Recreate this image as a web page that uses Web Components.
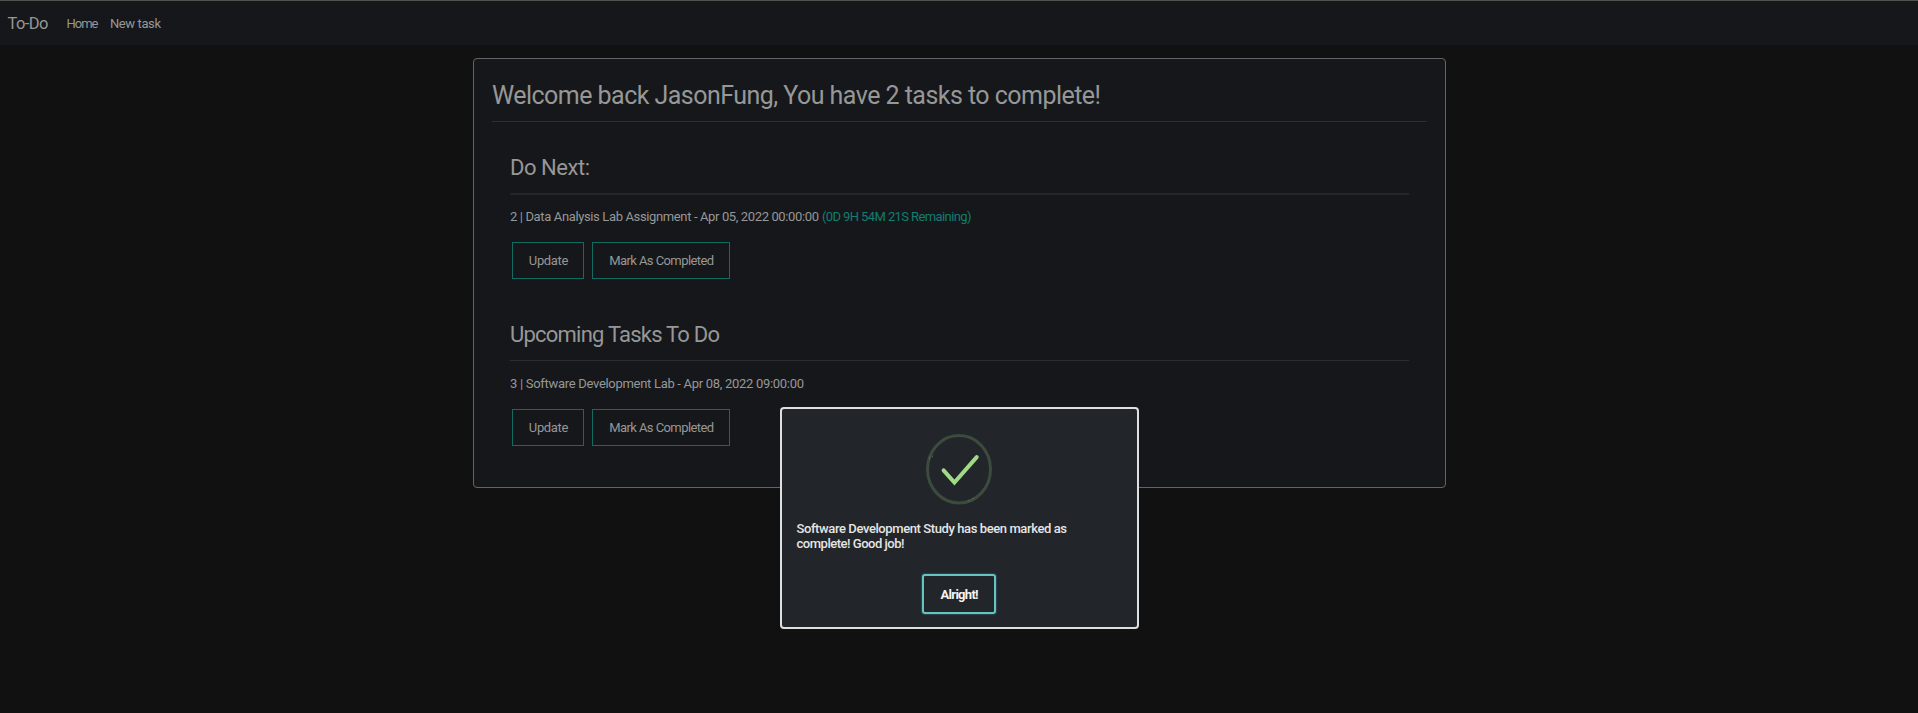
<!DOCTYPE html>
<html lang="en"><head><meta charset="utf-8"><title>To-Do</title>
<style>
html,body{margin:0;height:100%;overflow:hidden;background:#111;}
body{font:13px Roboto,"Liberation Sans",sans-serif;color:#979797}
</style></head><body>
<todo-app></todo-app>
<script>
const define=(name,html,init)=>customElements.define(name,class extends HTMLElement{
  constructor(){super();const t=document.createElement('template');t.innerHTML=html;
    this.attachShadow({mode:'open'}).append(t.content.cloneNode(true));}
  connectedCallback(){if(init)init(this);}
});
/* Text tracked so that its run fills the given width */
define('fit-text','<style>:host{display:inline-block;white-space:pre}span{display:inline-block}</style><span><slot></slot></span>',el=>{
  const s=el.shadowRoot.querySelector('span'),w=+el.getAttribute('w'),n=el.textContent.length;
  el.style.width=w+'px';
  const d=w-s.getBoundingClientRect().width;
  s.style.letterSpacing=(d/(n-1))+'px';
});
define('nav-bar',`<style>:host{display:flex;box-sizing:border-box;height:45px;border-top:1px solid #505451;background:#15171a;padding-left:7.5px;line-height:46px;color:#979797}
.b{font-size:16.5px}</style>
<fit-text class="b" style="margin-right:18px" w="41">To-Do</fit-text><fit-text style="margin-right:11.5px" w="32">Home</fit-text><fit-text w="51">New task</fit-text>`);
define('task-button',`<style>:host{display:block}button{display:flex;align-items:center;justify-content:center;box-sizing:border-box;width:100%;height:37px;border:1px solid #106b60;background:transparent;color:inherit;font:inherit;padding:0}</style><button><slot></slot></button>`);
define('task-group',`<style>:host{display:block;padding:0 18px}.t{height:27px;line-height:27px;font-size:22px}
.hr{height:1px;margin-top:12px;background:#2c2e31}:host([first]) .hr{height:2px;background:#232629}
.row{display:flex;height:20px;line-height:20px;margin-top:13px}:host([first]) .row{margin-top:12px}
.buttons{display:flex;gap:8px;margin:15px 0 0 2.4px}</style>
<div class="t"><slot name="title"></slot></div><div class="hr"></div><div class="row"><slot></slot></div>
<div class="buttons"><task-button style="width:72px"><fit-text w="39.5">Update</fit-text></task-button><task-button style="width:138px"><fit-text w="105">Mark As Completed</fit-text></task-button></div>`);
define('task-card',`<style>:host{display:block;box-sizing:border-box;width:973px;height:430px;margin:13px 0 0 473px;border:1px solid #626466;border-radius:4px;background:#15171a;padding:21px 18px}
.h{height:30px;line-height:31px;font-size:25px}.hr{height:1px;margin-top:11px;background:#2c2e31}</style>
<div class="h"><slot name="heading"></slot></div><div class="hr"></div><slot></slot>`);
define('success-icon',`<style>:host,svg{display:block;width:68px;height:72px}</style>
<svg viewBox="0 0 68 72" fill="none"><ellipse cx="34" cy="36.3" rx="31.5" ry="33.7" stroke="#3d4b3f" stroke-width="3"/><path d="M4.3 26.5l1-3.2M7 24.5l.7-2M43 68l2.4-1M47 66l2-1" stroke="#506b4c" stroke-width="1"/><path d="M18.6 37.3l10.8 12.2 22.3-25.4" stroke="#a1da86" stroke-width="4" stroke-linecap="round"/></svg>`);
define('alert-dialog',`<style>:host{position:absolute;left:780px;top:407px;width:359px;height:222px;box-sizing:border-box;border:2px solid #dedfdf;border-radius:4px;background:#22262a;color:#e5e5e5;padding:24px 15px 24px 14.5px}
success-icon{margin:0 auto}.m{display:flex;flex-direction:column;margin-top:16px;line-height:15px;font-weight:500;font-size:13px}
button{display:flex;align-items:center;justify-content:center;box-sizing:border-box;width:74px;height:40px;margin:23px auto 0;border:2px solid #63c5c0;border-radius:3px;background:transparent;color:#f4f4f4;font:700 13px Roboto,sans-serif;padding:0;box-shadow:0 0 1px 1px rgba(67,110,135,.4)}</style>
<success-icon></success-icon><div class="m"><fit-text w="270.5">Software Development Study has been marked as</fit-text><fit-text w="108">complete! Good job!</fit-text></div><button><fit-text w="38">Alright!</fit-text></button>`);
define('todo-app',`<style>:host{display:block;position:relative;height:713px}</style>
<nav-bar></nav-bar>
<task-card><fit-text slot="heading" w="609">Welcome back JasonFung, You have 2 tasks to complete!</fit-text>
<task-group first style="margin-top:32px"><fit-text slot="title" w="80">Do Next:</fit-text><fit-text w="309">2 | Data Analysis Lab Assignment - Apr 05, 2022 00:00:00</fit-text><fit-text w="149.5" style="margin-left:3px;color:#127d70">(0D 9H 54M 21S Remaining)</fit-text></task-group>
<task-group style="margin-top:42px"><fit-text slot="title" w="210">Upcoming Tasks To Do</fit-text><fit-text w="294">3 | Software Development Lab - Apr 08, 2022 09:00:00</fit-text></task-group>
</task-card><alert-dialog></alert-dialog>`);
</script></body></html>
